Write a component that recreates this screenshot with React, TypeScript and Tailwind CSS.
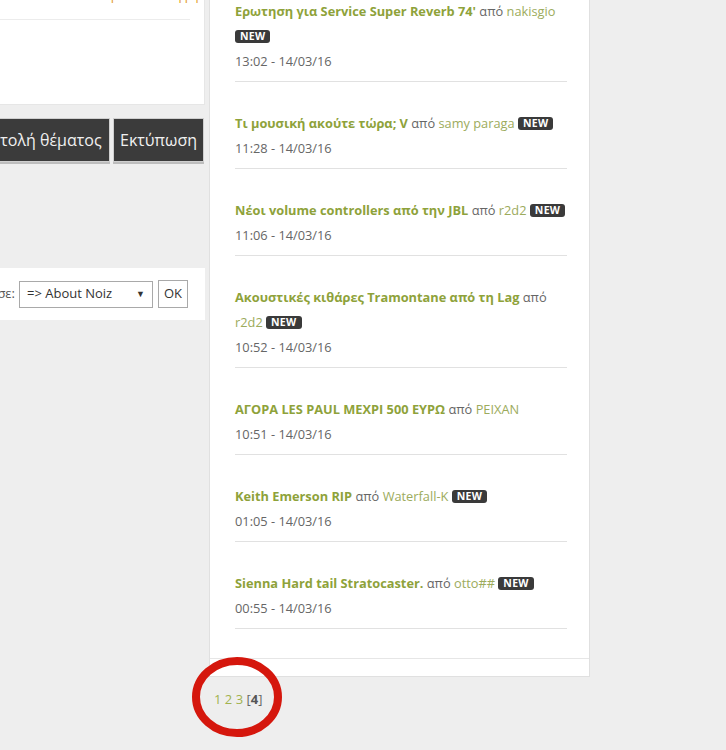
import React from "react";

type Topic = {
  title: string;
  author: string;
  time: string;
  isNew: boolean;
  badgeBreak?: boolean;
  authorBreak?: boolean;
};

const topics: Topic[] = [
  { title: "Ερωτηση για Service Super Reverb 74'", author: "nakisgio", time: "13:02 - 14/03/16", isNew: true, badgeBreak: true },
  { title: "Τι μουσική ακούτε τώρα; V", author: "samy paraga", time: "11:28 - 14/03/16", isNew: true },
  { title: "Νέοι volume controllers από την JBL", author: "r2d2", time: "11:06 - 14/03/16", isNew: true },
  { title: "Ακουστικές κιθάρες Tramontane από τη Lag", author: "r2d2", time: "10:52 - 14/03/16", isNew: true, authorBreak: true },
  { title: "ΑΓΟΡΑ LES PAUL ΜΕΧΡΙ 500 ΕΥΡΩ", author: "PEIXAN", time: "10:51 - 14/03/16", isNew: false },
  { title: "Keith Emerson RIP", author: "Waterfall-K", time: "01:05 - 14/03/16", isNew: true },
  { title: "Sienna Hard tail Stratocaster.", author: "otto##", time: "00:55 - 14/03/16", isNew: true },
];

const NewBadge = () => (
  <span className="inline-block align-[1px] rounded-[3px] bg-[#3a3a3a] px-[5px] text-[10.5px] font-bold leading-[13px] tracking-[0.3px] text-white">
    NEW
  </span>
);

const TopicRow = ({ t, first }: { t: Topic; first: boolean }) => (
  <div className={`border-b border-[#e1e1e1] pb-[7px] ${first ? "pt-0" : "pt-[29px]"}`}>
    <div className="text-[12.8px] leading-[25px] whitespace-nowrap">
      <span className="font-bold text-[#8ea23a]">{t.title}</span>{" "}
      <span className="text-[#666]">από</span>
      {t.authorBreak ? <br /> : " "}
      <span className="text-[#9cab5c]">{t.author}</span>
      {t.isNew && (
        <>
          {t.badgeBreak ? <br /> : " "}
          <NewBadge />
        </>
      )}
    </div>
    <div className="text-[12.8px] leading-[25px] text-[#666]">{t.time}</div>
  </div>
);

export default function App() {
  return (
    <div className="relative min-h-[750px] w-[726px] overflow-hidden bg-[#eeeeee] font-['Open_Sans',sans-serif]">
      <div className="flex items-start">
        {/* left column */}
        <div className="w-[205px] shrink-0 overflow-hidden">
          <div className="flex h-[105px] flex-col border-b border-r border-[#e6e6e6] bg-white">
            <div className="-mt-[14px] h-[19px] pl-[70px] text-[13px] leading-[19px] text-[#e39b2b] whitespace-nowrap">
              Στάλθηκε από το φρφ
            </div>
            <div className="mr-[14px] mt-[14px] border-t border-[#ececec]" />
          </div>

          <div className="mt-[13px] flex h-[44px]">
            <button className="-ml-[48px] flex h-full w-[158px] items-center justify-center border border-[#cfcfcf] bg-[#3b3b3b] text-[16px] text-[#f0f0f0] shadow-[0_2px_0_#bdbdbd]">
              Αποστολή θέματος
            </button>
            <button className="ml-[3px] flex h-full w-[91px] items-center justify-center border border-[#cfcfcf] bg-[#3b3b3b] text-[16px] text-[#f0f0f0] shadow-[0_2px_0_#bdbdbd]">
              Εκτύπωση
            </button>
          </div>

          <div className="mt-[106px] flex h-[52px] items-center bg-white">
            <span className="-ml-[70px] whitespace-nowrap text-[13px] text-[#555]">Μετάβαση σε:</span>
            <div className="ml-[4px] flex h-[27px] w-[134px] items-center justify-between border border-[#a9a9a9] bg-white px-[7px] text-[13px] text-[#333]">
              <span>=&gt; About Noiz</span>
              <span className="text-[9px] text-[#333]">▼</span>
            </div>
            <button className="ml-[5px] flex h-[28px] w-[30px] items-center justify-center border border-[#a9a9a9] bg-white text-[13px] text-[#333]">
              OK
            </button>
          </div>
        </div>

        {/* right column */}
        <div className="ml-[4px] w-[381px] shrink-0">
          <div className="flex flex-col border-b border-l border-r border-[#e0e0e0] bg-white">
            <div className="-mt-[1px] pb-[29px] pl-[25px] pr-[22px]">
              {topics.map((t, i) => (
                <TopicRow key={i} t={t} first={i === 0} />
              ))}
            </div>
            <div className="h-[18px] border-t border-[#e6e6e6]" />
          </div>
          <div className="mt-[12px] pl-[5px] text-[13px] leading-[20px]">
            <span className="text-[#a2b24e]">1</span>{" "}
            <span className="text-[#a2b24e]">2</span>{" "}
            <span className="text-[#a2b24e]">3</span>{" "}
            <span className="text-[#666]">
              [<b className="text-[#555]">4</b>]
            </span>
          </div>
        </div>
      </div>

      {/* hand-drawn annotation */}
      <svg className="pointer-events-none absolute left-[188px] top-[653px]" width="100" height="90" viewBox="0 0 100 90">
        <ellipse cx="49" cy="44" rx="41" ry="36" fill="none" stroke="#d5170d" strokeWidth="8" />
      </svg>
    </div>
  );
}
